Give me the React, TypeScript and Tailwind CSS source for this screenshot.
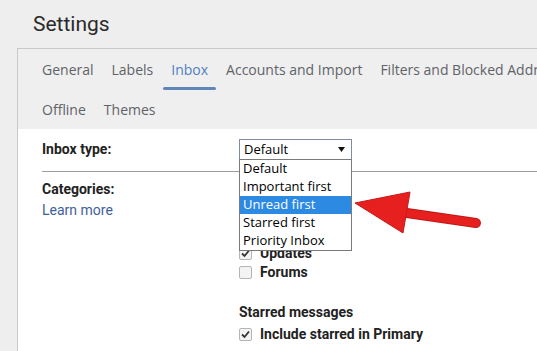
import React from 'react'

const tabs1 = ['General', 'Labels', 'Inbox', 'Accounts and Import', 'Filters and Blocked Addresses']
const tabs2 = ['Offline', 'Themes']
const options = ['Default', 'Important first', 'Unread first', 'Starred first', 'Priority Inbox']

function Checkbox({ checked }: { checked?: boolean }) {
  return (
    <span className="w-[13px] h-[13px] shrink-0 rounded-[2px] border border-[#b5b5b5] bg-[#f3f3f3] flex items-center justify-center">
      {checked && (
        <svg width="9" height="9" viewBox="0 0 9 9">
          <path d="M1 4.5 L3.5 7 L8 1.5" fill="none" stroke="#333" strokeWidth="1.8" />
        </svg>
      )}
    </span>
  )
}

function Tab({ label, active }: { label: string; active?: boolean }) {
  return (
    <div className="relative h-full px-[9px] flex items-center whitespace-nowrap">
      <span className={active ? 'text-[#4f80c6]' : 'text-[#5f6368]'}>{label}</span>
      {active && <span className="absolute left-[1px] right-[1px] bottom-0 h-[3px] rounded-full bg-[#5f87bb]" />}
    </div>
  )
}

export default function App() {
  return (
    <div className="w-[537px] h-[351px] overflow-hidden bg-[#eeeeee] font-['Roboto',sans-serif] relative">
      <div className="h-[48px] pl-[33px] pt-[9px] text-[21px] text-[#2a2a2a] leading-[30px]">Settings</div>

      <div className="ml-[17px] border-l border-t border-[#c9c9c9] h-[303px] flex flex-col">
        <div className="bg-[#efefef] text-[14px] pl-[15px] font-['Open_Sans',sans-serif]">
          <div className="h-[41px] flex">
            {tabs1.map((t) => (
              <Tab key={t} label={t} active={t === 'Inbox'} />
            ))}
          </div>
          <div className="h-[39px] flex">
            {tabs2.map((t) => (
              <Tab key={t} label={t} />
            ))}
          </div>
        </div>

        <div className="flex-1 bg-white pl-[24px] text-[14px] text-[#222]">
          <div className="flex items-center pt-[10px]">
            <div className="w-[197px] font-bold">Inbox type:</div>
            <div className="relative">
              <div className="w-[113px] h-[21px] border border-[#7f8ba3] flex items-center justify-between pl-[4px] pr-[6px] font-['Open_Sans',sans-serif] text-[13px] text-black">
                <span>Default</span>
                <svg width="7" height="5" viewBox="0 0 7 5">
                  <path d="M0 0 H7 L3.5 5 Z" fill="#111" />
                </svg>
              </div>
              <div className="absolute left-0 top-[20px] z-10 w-[113px] border border-[#7a7a7a] bg-white font-['Open_Sans',sans-serif] text-[13px] text-black">
                {options.map((o) => (
                  <div
                    key={o}
                    className={
                      o === 'Unread first'
                        ? 'h-[18px] pl-[3px] flex items-center bg-[#2d8ae3] text-white'
                        : 'h-[18px] pl-[3px] flex items-center'
                    }
                  >
                    {o}
                  </div>
                ))}
              </div>
            </div>
          </div>

          <div className="mt-[11px] h-px bg-[#9d9d9d]" />

          <div className="flex">
            <div className="w-[197px] pt-[7px] leading-[21px]">
              <div className="font-bold">Categories:</div>
              <div className="text-[#3f6199]">Learn more</div>
            </div>
            <div className="pt-[72px] font-bold">
              <div className="h-[19px] flex items-center gap-[8px]">
                <Checkbox checked />
                <span>Updates</span>
              </div>
              <div className="h-[19px] flex items-center gap-[8px]">
                <Checkbox />
                <span>Forums</span>
              </div>
              <div className="mt-[20px] h-[20px] flex items-center">Starred messages</div>
              <div className="mt-[2px] h-[20px] flex items-center gap-[8px]">
                <Checkbox checked />
                <span>Include starred in Primary</span>
              </div>
            </div>
          </div>
        </div>
      </div>

      <svg className="absolute left-[350px] top-[184px] z-20" width="135" height="56" viewBox="0 0 135 56">
        <line x1="50" y1="28" x2="126" y2="39" stroke="#c01818" strokeWidth="10" strokeLinecap="round" />
        <line x1="50" y1="28" x2="126" y2="39" stroke="#e5201f" strokeWidth="8" strokeLinecap="round" />
        <path d="M5 19 L60 8 L53 49 Z" fill="#e5201f" stroke="#c81a1a" strokeWidth="1" strokeLinejoin="round" />
      </svg>
    </div>
  )
}
